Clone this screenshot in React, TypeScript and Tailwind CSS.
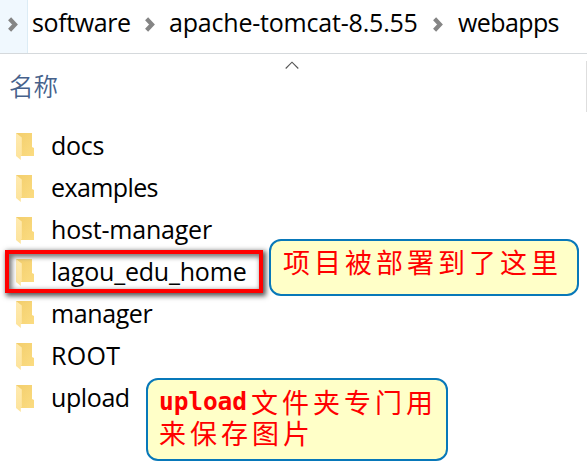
const ui = "font-['Open_Sans','Noto_Sans_CJK_SC',sans-serif]";

const files = [
  { name: "docs", tracking: "tracking-[-0.3px]" },
  { name: "examples", tracking: "tracking-[-0.6px]" },
  { name: "host-manager", tracking: "tracking-[-0.2px]" },
  { name: "lagou_edu_home", tracking: "tracking-[-0.2px]" },
  { name: "manager", tracking: "tracking-[-0.4px]" },
  { name: "ROOT", tracking: "tracking-[0.3px]" },
  { name: "upload", tracking: "tracking-[-0.4px]" },
];

function Chevron() {
  return (
    <svg width="10" height="15" viewBox="0 0 10 15" className="shrink-0">
      <path d="M1.6 1.8 7 7.5 1.6 13.2" fill="none" stroke="#858585" strokeWidth="4.2" />
    </svg>
  );
}

function Folder() {
  return (
    <svg width="19" height="28" viewBox="0 0 19 28" className="mt-0.5 shrink-0">
      <defs>
        <linearGradient id="back" x1="0" y1="0" x2="1" y2="1">
          <stop offset="0" stopColor="#f3ce6c" />
          <stop offset="1" stopColor="#fbdc82" />
        </linearGradient>
        <linearGradient id="flap" x1="0" y1="0" x2="0" y2="1">
          <stop offset="0" stopColor="#ffeab0" />
          <stop offset="1" stopColor="#fde39a" />
        </linearGradient>
      </defs>
      <path d="M0 0H16V14L18 15V23H0Z" fill="url(#back)" />
      <path d="M0 0 5.8 4.5V22L4.8 23V27L0 23Z" fill="url(#flap)" />
    </svg>
  );
}

export default function App() {
  return (
    <div className={`relative h-[472px] w-[587px] overflow-hidden bg-white text-black ${ui}`}>
      <header className="flex h-[54px] items-stretch border-b border-[#d5d9dc] text-[25px]">
        <div className="flex w-7 items-center border-r border-[#dcecf5] bg-[#f0f8fe] pb-[5px] pl-2">
          <Chevron />
        </div>
        <div className="flex items-center pb-[5px] pl-1 whitespace-nowrap">
          <span className="-mt-0.5 w-[113px] tracking-[-0.4px]">software</span>
          <Chevron />
          <span className="-mt-0.5 ml-[14px] w-[264px] tracking-[-0.2px]">apache-tomcat-8.5.55</span>
          <Chevron />
          <span className="-mt-0.5 ml-[15px] tracking-[-0.6px]">webapps</span>
        </div>
      </header>
      <div className="flex h-[71px] justify-between">
        <div className="flex w-[299px] justify-between pl-[9px]">
          <span className="mt-[17px] text-[24.5px] leading-8 font-[350] text-[#46618b]">名称</span>
          <svg width="14" height="9" viewBox="0 0 14 9" className="mt-[7px]">
            <path d="M.7 7.5 7 1.2 13.3 7.5" fill="none" stroke="#555" strokeWidth="1.1" />
          </svg>
        </div>
        <div className="mt-[7px] h-[51px] w-px bg-[#dedede]" />
      </div>
      <main>
        {files.map((f) => (
          <div key={f.name} className="flex h-[42px] items-center pl-4">
            <Folder />
            <span className={`-mt-px ml-4 text-[25px] leading-[41px] ${f.tracking}`}>{f.name}</span>
          </div>
        ))}
      </main>
      <div className="absolute top-[250px] left-[5px] h-[43px] w-[258px] border-4 border-[#ff0000] shadow-[2px_2px_5px_1px_#555,inset_2px_2px_5px_1px_#777]" />
      <div className="absolute top-[239px] left-[269px] h-[57px] w-[310px] rounded-[12px] border-2 border-[#0878b9] bg-[#ffffc8] pt-[3px] pl-3 text-[27px] leading-[36px] tracking-[4px] whitespace-nowrap text-[#ff0000] font-['Noto_Sans_CJK_SC',sans-serif]">
        项目被部署到了这里
      </div>
      <div className="absolute top-[378px] left-[146px] h-[83px] w-[302px] rounded-[12px] border-2 border-[#0878b9] bg-[#ffffc8] pt-[6px] pl-[11px] text-[27px] leading-[31px] tracking-[4px] whitespace-nowrap text-[#ff0000] font-['Noto_Sans_CJK_SC',sans-serif]">
        <div className="flex h-[31px]">
          <span className="w-[92px] font-['DejaVu_Sans_Mono',monospace] text-[24.5px] leading-[32px] font-bold tracking-[-0.1px]">
            upload
          </span>
          <span>文件夹专门用</span>
        </div>
        <div className="h-[31px]">来保存图片</div>
      </div>
    </div>
  );
}
